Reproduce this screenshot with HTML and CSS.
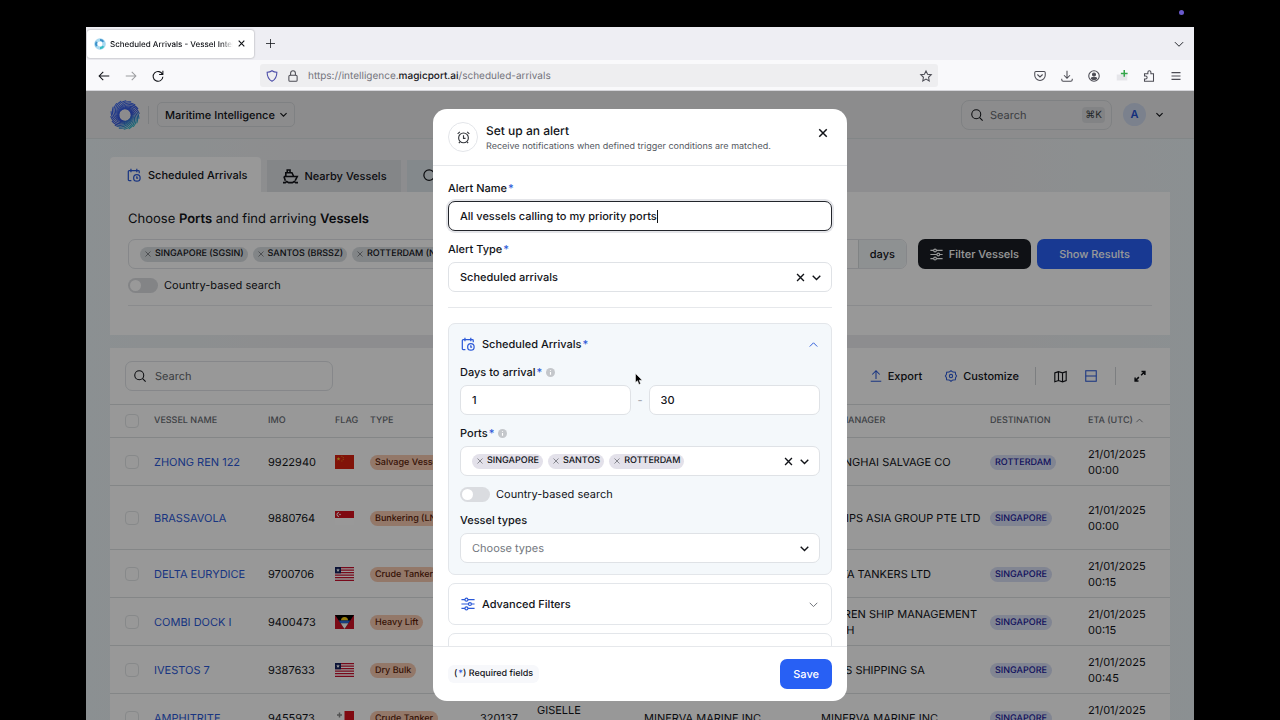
FILE: index.html
```html
<!DOCTYPE html>
<html lang="en">
<head>
<meta charset="utf-8">
<title>Scheduled Arrivals - Vessel Intelligence</title>
<link rel="stylesheet" href="styles.css">
</head>
<body>
<svg class="defs" aria-hidden="true">
  <defs>
    <linearGradient id="swirl-fill" gradientUnits="userSpaceOnUse" x1="6" y1="2" x2="24" y2="30">
      <stop offset="0" stop-color="#3f6df0"/><stop offset=".6" stop-color="#3353d8"/><stop offset="1" stop-color="#2fc9c0"/>
    </linearGradient>
    <path id="blade" d="M14 10C19 8.500 24 11 26 15.500C28 20 27 24.500 24.500 27.500" fill="none" stroke="#fff" stroke-width="1.100" stroke-linecap="round"/>
    <mask id="swirl-mask" maskUnits="userSpaceOnUse" x="0" y="0" width="32" height="32">
      <use href="#blade"/><use href="#blade" transform="rotate(20 16 16)"/><use href="#blade" transform="rotate(40 16 16)"/><use href="#blade" transform="rotate(60 16 16)"/><use href="#blade" transform="rotate(80 16 16)"/><use href="#blade" transform="rotate(100 16 16)"/><use href="#blade" transform="rotate(120 16 16)"/><use href="#blade" transform="rotate(140 16 16)"/><use href="#blade" transform="rotate(160 16 16)"/><use href="#blade" transform="rotate(180 16 16)"/><use href="#blade" transform="rotate(200 16 16)"/><use href="#blade" transform="rotate(220 16 16)"/><use href="#blade" transform="rotate(240 16 16)"/><use href="#blade" transform="rotate(260 16 16)"/><use href="#blade" transform="rotate(280 16 16)"/><use href="#blade" transform="rotate(300 16 16)"/><use href="#blade" transform="rotate(320 16 16)"/><use href="#blade" transform="rotate(340 16 16)"/>
    </mask>
    <symbol id="swirl" viewBox="0 0 32 32"><rect width="32" height="32" fill="url(#swirl-fill)" mask="url(#swirl-mask)"/></symbol>
    <symbol id="i-x" viewBox="0 0 16 16"><path d="M3 3l10 10M13 3L3 13"/></symbol>
    <symbol id="i-down" viewBox="0 0 16 16"><path d="M2.500 5.500L8 11l5.500-5.500"/></symbol>
    <symbol id="i-up" viewBox="0 0 16 16"><path d="M2.500 11L8 5.500l5.500 5.500"/></symbol>
    <symbol id="i-search" viewBox="0 0 16 16"><circle cx="7" cy="7" r="6"/><path d="M11.500 11.500l4 4"/></symbol>
    <symbol id="i-cal" viewBox="0 0 16 16"><path d="M5 14.500H2.500a1 1 0 0 1-1-1V4a1 1 0 0 1 1-1H13a1 1 0 0 1 1 1v2M4.500 .8v4M11.200 .8v4"/><circle cx="11.300" cy="11.300" r="3.700"/><path d="M11.200 9.500v2h1.500"/></symbol>
    <symbol id="i-sliders" viewBox="0 0 16 16"><path d="M.5 3h4M8 3h7.500M.5 8h8M12 8h3.500M.5 13h4M8 13h7.500"/><circle cx="6.200" cy="3" r="1.700"/><circle cx="10.200" cy="8" r="1.700"/><circle cx="6.200" cy="13" r="1.700"/></symbol>
    <symbol id="i-info" viewBox="0 0 16 16"><circle cx="8" cy="8" r="8" fill="#c4c7cb" stroke="none"/><path d="M8 7v5M8 3.800v1.500" stroke="#fff" stroke-width="2"/></symbol>
    <symbol id="f-lr" viewBox="0 0 19 14"><path fill="#fff" d="M0 0h19v14H0z"/><path d="M0 .7h19M0 3.200h19M0 5.700h19M0 8.200h19M0 10.700h19M0 13.300h19" stroke="#c8102e" stroke-width="1.300"/><path fill="#14215c" d="M0 0h6v6.300H0z"/><path fill="#fff" d="M3 1.300l.5 1.300h1.300l-1 .8.4 1.300L3 3.900l-1.200.8.4-1.300-1-.8h1.300z"/></symbol>
  </defs>
</svg>

<div class="browser">
  <div class="tabstrip">
    <div class="browser-tab">
      <svg class="favicon" viewBox="0 0 32 32"><circle cx="16" cy="16" r="11" fill="none" stroke="#a9d9f0" stroke-width="9"/><path d="M7 22a11 11 0 0 1 0-12M16 5a11 11 0 0 1 9 5" fill="none" stroke="#3b8fca" stroke-width="5"/><path d="M16 27a11 11 0 0 0 9-5" fill="none" stroke="#36bfc4" stroke-width="6"/></svg>
      <span class="browser-tab-title">Scheduled Arrivals - Vessel Intelligence</span>
      <button class="plain" aria-label="Close tab"><svg class="icon s9 bold"><use href="#i-x"/></svg></button>
    </div>
    <button class="plain new-tab" aria-label="New tab"><svg class="icon s9" viewBox="0 0 16 16"><path d="M8 0v16M0 8h16"/></svg></button>
    <button class="plain list-tabs" aria-label="List tabs"><svg class="icon s12 thin"><use href="#i-down"/></svg></button>
  </div>
  <div class="toolbar">
    <div class="nav">
      <button class="plain" aria-label="Back"><svg class="icon s12" viewBox="0 0 16 16"><path d="M15 8H1.500M7 2.500L1.500 8 7 13.500"/></svg></button>
      <button class="plain faded" aria-label="Forward"><svg class="icon s12" viewBox="0 0 16 16"><path d="M1 8h13.500M9 2.500L14.500 8 9 13.500"/></svg></button>
      <button class="plain" aria-label="Reload"><svg class="icon s12" viewBox="0 0 16 16"><path d="M14 6A6.500 6.500 0 1 0 14.500 9M14.500 1v5h-5"/></svg></button>
    </div>
    <div class="address">
      <svg class="icon s12 shield" viewBox="0 0 16 16"><path d="M8 1c2 1.500 4 2 6.500 2 0 6-1.500 9.500-6.500 12C3 12.500 1.500 9 1.500 3 4 3 6 2.500 8 1z"/></svg>
      <svg class="icon s12 grey" viewBox="0 0 16 16"><rect x="2.500" y="7" width="11" height="8" rx="1.500"/><path d="M4.800 7V4.200a3.200 3.200 0 0 1 6.400 0V7"/></svg>
      <span class="url">https://intelligence.<b>magicport.ai</b>/scheduled-arrivals</span>
      <svg class="icon s12 grey" viewBox="0 0 16 16"><path d="M8 1.200l2.100 4.500 4.900.6-3.600 3.400.9 4.900L8 12.200l-4.300 2.400.9-4.900L1 6.300l4.900-.6z"/></svg>
    </div>
    <div class="extensions">
      <svg class="icon s12 grey" viewBox="0 0 16 16"><path d="M2.500 2h11a1.500 1.500 0 0 1 1.500 1.500V7A7 7 0 0 1 1 7V3.500A1.500 1.500 0 0 1 2.500 2zM4.500 6L8 9.300 11.500 6"/></svg>
      <svg class="icon s12 grey" viewBox="0 0 16 16"><path d="M8 1v9.500M4 7l4 4 4-4M1 11.500V13a2 2 0 0 0 2 2h10a2 2 0 0 0 2-2v-1.500"/></svg>
      <svg class="icon s12 grey" viewBox="0 0 16 16"><circle cx="8" cy="8" r="7"/><circle cx="8" cy="6" r="2" fill="currentColor"/><path fill="currentColor" d="M4.500 11.500C4.500 9 11.500 9 11.500 11.500 10 13 6 13 4.500 11.500z"/></svg>
      <svg class="icon s12" viewBox="0 0 16 16"><path d="M1 6h14v8H1z" fill="#e6e6ea" stroke="none"/><path d="M11 0v9M6.500 4.500h9" stroke="#35a64b" stroke-width="2"/></svg>
      <svg class="icon s12 grey" viewBox="0 0 16 16"><path d="M2 15h12V5h-3.500V3a2 2 0 0 0-4 0v2H2v3h1.500a2 2 0 0 1 0 4H2z"/></svg>
      <svg class="icon s12 grey" viewBox="0 0 16 16"><path d="M2 3.500h12M2 8h12M2 12.500h12"/></svg>
    </div>
  </div>

  <div class="viewport">
    <div class="app">
      <header class="app-header">
        <svg class="logo"><use href="#swirl"/></svg>
        <span class="vline"></span>
        <button class="product">Maritime Intelligence <svg class="icon s9 bold"><use href="#i-down"/></svg></button>
        <label class="header-search"><svg class="icon s12"><use href="#i-search"/></svg><input type="text" placeholder="Search" aria-label="Search"><kbd>⌘K</kbd></label>
        <button class="account"><span class="avatar">A</span><svg class="icon s9 bold"><use href="#i-down"/></svg></button>
      </header>

      <main class="content">
        <nav class="tabs">
          <button class="tab active"><svg class="icon s14 blue"><use href="#i-cal"/></svg>Scheduled Arrivals</button>
          <button class="tab"><svg class="icon s15" viewBox="0 0 16 16"><path stroke-width="1.700" d="M3 8V4h6.500l2 4M4.500 4V1h3v3M1 8h14.200L13 12.500M1 8l1.500 4.500M0 14.500h2.500l1.500-1.200 2 1.200h4l2-1.200 1.500 1.200H16"/></svg>Nearby Vessels</button>
          <button class="tab pale"><svg class="icon s14"><use href="#i-search"/></svg>Search</button>
        </nav>

        <section class="card finder">
          <h1>Choose <b>Ports</b> and find arriving <b>Vessels</b></h1>
          <div class="finder-row">
            <div class="field chips grow">
              <span class="chip"><svg class="icon s8"><use href="#i-x"/></svg>SINGAPORE (SGSIN)</span>
              <span class="chip"><svg class="icon s8"><use href="#i-x"/></svg>SANTOS (BRSSZ)</span>
              <span class="chip"><svg class="icon s8"><use href="#i-x"/></svg>ROTTERDAM (NLRTM)</span>
            </div>
            <div class="field days"><input type="text" value="30" aria-label="Days to arrival"><span>days</span></div>
            <div class="actions">
              <button class="btn dark"><svg class="icon s13"><use href="#i-sliders"/></svg>Filter Vessels</button>
              <button class="btn primary wide">Show Results</button>
            </div>
          </div>
          <label class="switch"><input type="checkbox">Country-based search</label>
          <hr>
        </section>

        <section class="card results">
          <div class="results-bar">
            <label class="field search"><svg class="icon s12"><use href="#i-search"/></svg><input type="text" placeholder="Search" aria-label="Search vessels"></label>
            <div class="tools">
              <button class="tool"><svg class="icon s12 blue" viewBox="0 0 16 16"><path d="M8 12V1.500M3 6l5-5 5 5M1 15h14"/></svg>Export</button>
              <button class="tool"><svg class="icon s12 blue" viewBox="0 0 16 16"><path d="M8 1l2.500 1.800 3.300.2.400 3.100L15.500 8l-1.300 1.900-.4 3.100-3.300.2L8 15l-2.500-1.800-3.300-.2-.4-3.100L.5 8l1.300-1.900.4-3.100 3.300-.2z"/><circle cx="8" cy="8" r="2.200"/></svg>Customize</button>
              <span class="vline"></span>
              <button class="tool" aria-label="Map view"><svg class="icon s13" viewBox="0 0 16 16"><path d="M1 3.500L5.500 2l5 1.500L15 2v11l-4.500 1.500-5-1.500L1 14.500zM5.500 2v11M10.500 3.500v11"/></svg></button>
              <button class="tool" aria-label="Table view"><svg class="icon s12 blue" viewBox="0 0 16 16"><rect x="1" y="1" width="14" height="14"/><path d="M1 8h14"/></svg></button>
              <span class="vline"></span>
              <button class="tool" aria-label="Full screen"><svg class="icon s12 bold" viewBox="0 0 16 16"><path d="M10 2h4.500v4.500M14.500 2L9.500 7M6 14.500H1.500V10M1.500 14.500l5-5"/></svg></button>
            </div>
          </div>
          <table>
            <colgroup><col class="c-check"><col class="c-name"><col class="c-imo"><col class="c-flag"><col class="c-type"><col class="c-mmsi"><col class="c-alias"><col class="c-owner"><col class="c-manager"><col class="c-dest"><col></colgroup>
            <thead>
              <tr><th><input type="checkbox" aria-label="Select all"></th><th>VESSEL NAME</th><th>IMO</th><th>FLAG</th><th>TYPE</th><th></th><th></th><th>OWNER</th><th>ISM MANAGER</th><th>DESTINATION</th><th>ETA (UTC) <svg class="icon s9"><use href="#i-up"/></svg></th></tr>
            </thead>
            <tbody>
              <tr><td><input type="checkbox" aria-label="Select ZHONG REN 122"></td><td><a href="#">ZHONG REN 122</a></td><td>9922940</td><td><svg class="flag" viewBox="0 0 19 14"><path fill="#d7200f" d="M0 0h19v14H0z"/><path fill="#f7c52b" d="M3.500 2l.5 1.300h1.400L4.300 4.200l.4 1.300-1.200-.8-1.200.8.4-1.300-1.100-.9H3z"/><path d="M6.500 1.300h.8M7.800 2.700h.8M7.800 4.600h.8M6.500 6h.8" stroke="#f7c52b" stroke-width=".8"/></svg></td><td><span class="pill">Salvage Vessel</span></td><td></td><td></td><td></td><td>SHANGHAI SALVAGE CO</td><td><span class="pill port">ROTTERDAM</span></td><td>21/01/2025 00:00</td></tr>
              <tr class="tall"><td><input type="checkbox" aria-label="Select BRASSAVOLA"></td><td><a href="#">BRASSAVOLA</a></td><td>9880764</td><td><svg class="flag" viewBox="0 0 19 14"><path fill="#fff" d="M0 0h19v14H0z"/><path fill="#d50f1d" d="M0 0h19v7H0z"/><path fill="none" stroke="#fff" d="M4 1.500a2 2 0 1 0 0 4"/><circle cx="5" cy="3.500" r=".8" fill="#fff"/></svg></td><td><span class="pill">Bunkering (LNG)</span></td><td></td><td></td><td></td><td>V.SHIPS ASIA GROUP PTE LTD</td><td><span class="pill port">SINGAPORE</span></td><td>21/01/2025 00:00</td></tr>
              <tr><td><input type="checkbox" aria-label="Select DELTA EURYDICE"></td><td><a href="#">DELTA EURYDICE</a></td><td>9700706</td><td><svg class="flag"><use href="#f-lr"/></svg></td><td><span class="pill">Crude Tanker</span></td><td></td><td></td><td></td><td>DELTA TANKERS LTD</td><td><span class="pill port">SINGAPORE</span></td><td>21/01/2025 00:15</td></tr>
              <tr><td><input type="checkbox" aria-label="Select COMBI DOCK I"></td><td><a href="#">COMBI DOCK I</a></td><td>9400473</td><td><svg class="flag" viewBox="0 0 19 14"><path fill="#ce1126" d="M0 0h19v14H0z"/><path fill="#000" d="M0 0h19L9.500 14z"/><path fill="#fcd116" d="M6 5.500a3.500 3.500 0 0 1 7 0z"/><path fill="#2868d8" d="M3.700 5.500h11.600L13.400 8.300H5.600z"/><path fill="#fff" d="M5.600 8.300h7.800L9.500 14z"/></svg></td><td><span class="pill">Heavy Lift</span></td><td></td><td></td><td></td><td>HARREN SHIP MANAGEMENT GMBH</td><td><span class="pill port">SINGAPORE</span></td><td>21/01/2025 00:15</td></tr>
              <tr><td><input type="checkbox" aria-label="Select IVESTOS 7"></td><td><a href="#">IVESTOS 7</a></td><td>9387633</td><td><svg class="flag"><use href="#f-lr"/></svg></td><td><span class="pill">Dry Bulk</span></td><td></td><td></td><td></td><td>ARIES SHIPPING SA</td><td><span class="pill port">SINGAPORE</span></td><td>21/01/2025 00:45</td></tr>
              <tr><td><input type="checkbox" aria-label="Select AMPHITRITE"></td><td><a href="#">AMPHITRITE</a></td><td>9455973</td><td><svg class="flag" viewBox="0 0 19 14"><path fill="#fff" d="M0 0h19v14H0z"/><path fill="#d50f1d" d="M9.500 0H19v14H9.500z"/><path d="M4.500 1.500v5M2 4h5" stroke="#888" stroke-width="1.500"/></svg></td><td><span class="pill">Crude Tanker</span></td><td>320137</td><td>GISELLE MARINE</td><td>MINERVA MARINE INC</td><td>MINERVA MARINE INC</td><td><span class="pill port">SINGAPORE</span></td><td>21/01/2025 01:00</td></tr>
            </tbody>
          </table>
        </section>
      </main>
    </div>

    <div class="backdrop">
      <form class="modal" role="dialog" aria-labelledby="modal-title">
        <header class="modal-head">
          <span class="round"><svg class="icon s13" viewBox="0 0 16 16"><circle cx="8" cy="8.500" r="6"/><path d="M8 5.300V9h2.500M.8 3.500L3.500 1M12.500 1l2.700 2.500M3.500 13.500L2.300 15M12.500 13.500l1.200 1.500"/></svg></span>
          <div class="titles"><h2 id="modal-title">Set up an alert</h2><p>Receive notifications when defined trigger conditions are matched.</p></div>
          <button type="button" class="plain" aria-label="Close"><svg class="icon s12 bold"><use href="#i-x"/></svg></button>
        </header>

        <div class="modal-body">
          <div class="group">
            <label class="lbl" for="alert-name">Alert Name<i>*</i></label>
            <div class="field focused"><input class="typed" id="alert-name" type="text" size="29" value="All vessels calling to my priority ports"><span class="caret"></span></div>
          </div>
          <div class="group">
            <label class="lbl" for="alert-type">Alert Type<i>*</i></label>
            <div class="field"><select id="alert-type"><option>Scheduled arrivals</option></select><button type="button" class="plain" aria-label="Clear type"><svg class="icon s11 bold"><use href="#i-x"/></svg></button><svg class="icon s11 bold"><use href="#i-down"/></svg></div>
          </div>
          <hr>
          <div class="panels">
            <section class="panel open">
              <button type="button" class="panel-title"><svg class="icon s14 blue"><use href="#i-cal"/></svg><span>Scheduled Arrivals<i>*</i></span><svg class="icon s11 blue"><use href="#i-up"/></svg></button>
              <div class="group">
                <label class="lbl" for="day-from">Days to arrival<i>*</i> <svg class="icon s9"><use href="#i-info"/></svg></label>
                <div class="range"><div class="field"><input id="day-from" type="text" value="1"></div><span>-</span><div class="field"><input aria-label="Days to" type="text" value="30"></div></div>
              </div>
              <div class="group">
                <label class="lbl" for="ports">Ports<i>*</i> <svg class="icon s9"><use href="#i-info"/></svg></label>
                <div class="field chips">
                  <span class="chip"><svg class="icon s8"><use href="#i-x"/></svg>SINGAPORE</span>
                  <span class="chip"><svg class="icon s8"><use href="#i-x"/></svg>SANTOS</span>
                  <span class="chip"><svg class="icon s8"><use href="#i-x"/></svg>ROTTERDAM</span>
                  <input id="ports" type="text"><button type="button" class="plain" aria-label="Clear ports"><svg class="icon s11 bold"><use href="#i-x"/></svg></button><svg class="icon s11 bold"><use href="#i-down"/></svg>
                </div>
              </div>
              <label class="switch"><input type="checkbox">Country-based search</label>
              <div class="group">
                <label class="lbl" for="types">Vessel types</label>
                <div class="field"><select id="types" class="empty"><option>Choose types</option></select><svg class="icon s11 bold"><use href="#i-down"/></svg></div>
              </div>
            </section>
            <section class="panel">
              <button type="button" class="panel-title"><svg class="icon s14 blue"><use href="#i-sliders"/></svg><span>Advanced Filters</span><svg class="icon s11 muted"><use href="#i-down"/></svg></button>
            </section>
            <section class="panel">
              <button type="button" class="panel-title" aria-label="Notifications"></button>
            </section>
          </div>
        </div>

        <footer class="modal-foot">
          <span class="required">(<i>*</i>) Required fields</span>
          <button type="button" class="btn primary">Save</button>
        </footer>
      </form>
    </div>
  </div>
</div>
<span class="rec-dot"></span>
<svg class="cursor" viewBox="0 0 8 12"><path d="M.5.500v9l2-1.800L4 11.500l1.600-.7L4.200 7.200h3z" fill="#000" stroke="#fff" stroke-width=".5"/></svg>
</body>
</html>
```
FILE: styles.css
```css
* { box-sizing: border-box; }
body {
  margin: 0;
  height: 100vh;
  padding: 27px 86px 0;
  background: #000;
  color: #111318;
  font: 500 11px/16px Inter, "Liberation Sans", sans-serif;
  text-rendering: geometricPrecision;
  overflow: hidden;
}
h1, h2, p { margin: 0; }
button, input, select { font: inherit; color: inherit; text-rendering: inherit; margin: 0; padding: 0; border: 0; background: none; outline: 0; }
button { display: inline-flex; align-items: center; }
i { font-style: normal; color: #2b59d8; margin-left: 1px; }
hr { width: 100%; margin: 0; border: 0; border-top: 1px solid #e6e8eb; }
.defs { position: absolute; width: 0; height: 0; }

.icon { flex: none; fill: none; stroke: currentColor; stroke-width: 1.4; overflow: visible; }
.icon.bold { stroke-width: 2; }
.icon.thin { stroke-width: 1.2; }
.blue { color: #2b59d8; }
.grey { color: #4c4c54; }
.muted { color: #6d7178; }
.s8 { width: 8px; height: 8px; }
.s9 { width: 9px; height: 9px; }
.s11 { width: 11px; height: 11px; }
.s12 { width: 12px; height: 12px; }
.s13 { width: 13px; height: 13px; }
.s14 { width: 14px; height: 14px; }
.s15 { width: 15px; height: 15px; }

/* Browser window */
.browser { display: flex; flex-direction: column; height: 100%; background: #f9f9fb; }
.tabstrip { display: flex; align-items: center; height: 33px; padding: 0 9px 0 1px; background: #eeeef3; }
.browser-tab { display: flex; align-items: center; gap: 4px; width: 167px; height: 28px; padding: 0 8px 0 7px; border-radius: 3px; background: #fff; box-shadow: 0 0 2px #0006; font-size: 8px; }
.browser-tab-title { flex: 1; overflow: hidden; white-space: nowrap; -webkit-mask-image: linear-gradient(90deg, #000 90%, transparent); }
.favicon { width: 12px; height: 12px; }
.new-tab { margin-left: 12px; }
.list-tabs { margin-left: auto; }
.toolbar { display: flex; align-items: center; height: 31px; padding-top: 1px; border-bottom: 1px solid #d5d5da; }
.nav { display: flex; gap: 15px; width: 174px; padding-left: 12px; }
.faded { opacity: .4; }
.address { flex: 1; display: flex; align-items: center; gap: 9px; height: 23px; padding: 0 6px; border-radius: 3px; background: #eeeef0; }
.shield { color: #4a4ba8; }
.url { flex: 1; color: #74747c; font-size: 10px; font-weight: 400; }
.url b { font-weight: 500; color: #15151a; }
.extensions { display: flex; justify-content: space-between; width: 256px; padding: 0 12px 0 96px; }

/* Application */
.viewport { position: relative; flex: 1; min-height: 0; overflow: hidden; }
.app { height: 100%; background: linear-gradient(90deg, #e8f0f3, #ececee 20%, #ececee 80%, #e8f0f3); }
.app-header { display: flex; align-items: center; height: 48px; padding: 0 30px 0 23px; background: #eaeaeb; border-bottom: 1px solid #d9dfe2; }
.logo { width: 32px; height: 32px; }
.vline { width: 1px; height: 18px; background: #cfd2d5; }
.app-header .vline { margin: 0 8px 0 7px; }
.product { gap: 4px; height: 25px; padding: 0 6px 0 7px; border: 1px solid #d4d7da; border-radius: 5px; }
.header-search { display: flex; align-items: center; gap: 7px; width: 151px; height: 30px; margin-left: auto; padding: 0 6px 0 9px; border: 1px solid #d4d7da; border-radius: 8px; font-weight: 400; }
.header-search input { flex: 1; min-width: 0; }
kbd { padding: 0 3px; border-radius: 4px; background: #d9dbde; font: inherit; font-size: 10px; color: #3b3f45; }
::placeholder { color: #63676d; opacity: 1; }
.account { gap: 9px; margin-left: 11px; }
.avatar { width: 23px; border-radius: 50%; background: #cdd7ec; color: #1f4fcf; font-weight: 600; line-height: 23px; }

.content { padding: 18px 24px 0; }
.tabs { display: flex; align-items: flex-end; gap: 6px; }
.tab { gap: 6px; height: 32px; padding: 0 14px 0 16px; background: #dddfe3; }
.tab.active { height: 35px; gap: 7px; padding: 0 14px 0 17px; background: #fdfdfd; border-radius: 4px 4px 0 0; }
.tab.pale { background: #dde5e9; }
.card { background: #fdfdfd; }
.finder { display: flex; flex-direction: column; padding: 17px 18px 29px; }
.finder h1 { font-size: 13px; line-height: 21px; font-weight: 400; }
.finder h1 b { font-weight: 600; }
.finder-row { display: flex; gap: 11px; margin: 9px 0 8px; }
.grow { flex: 1; }
.days { flex: none; width: 160px; overflow: hidden; }
.app .days { padding-right: 0; }
.days input { width: 0; }
.days span { width: 48px; background: #edf2f4; text-align: center; line-height: 28px; border-left: 1px solid #d5dadd; }
.actions { display: flex; gap: 6px; }
.finder hr { margin-top: 12px; }

.field { display: flex; align-items: center; gap: 5px; height: 30px; padding: 0 11px; border: 1px solid #dfe2e6; border-radius: 7px; background: #fff; }
.app .field { background: #fdfdfd; }
.field input, .field select { flex: 1; min-width: 0; appearance: none; }
.field .empty { color: #73777e; font-weight: 400; }
.chip { display: flex; align-items: center; gap: 3px; height: 15px; padding: 0 4px; border-radius: 8px; background: #e3e1ea; font-size: 9px; white-space: nowrap; }
.app .chip { background: #d9dee2; }
.chip .icon { color: #5d6066; }
.btn { justify-content: center; gap: 7px; height: 30px; padding: 0 13px; border-radius: 7px; color: #fff; }
.btn.primary { background: #2860f4; }
.btn.dark { gap: 6px; padding: 0 12px; background: #191d24; }
.btn.wide { width: 115px; }
.switch { display: flex; align-items: center; gap: 6px; font-weight: 400; }
.switch input { appearance: none; display: flex; width: 30px; height: 15px; padding: 2px; border-radius: 8px; background: #dadce0; }
.switch input::before { content: ""; width: 11px; height: 11px; border-radius: 50%; background: #fff; }

.results { margin-top: 13px; }
.results-bar { display: flex; justify-content: space-between; align-items: center; padding: 13px 24px 13px 15px; }
.search { width: 208px; padding-left: 8px; gap: 9px; font-weight: 400; }
.tools { display: flex; align-items: center; gap: 18px; }
.tool { gap: 6px; }
.tool:nth-child(2) { margin: 0 -2px 0 5px; }
table { width: 100%; border-collapse: collapse; table-layout: fixed; font-weight: 400; }
th { height: 33px; font-size: 9px; font-weight: 500; color: #686c73; }
td { height: 48px; }
.tall td { height: 64px; }
th, td { padding: 0; text-align: left; border-top: 1px solid #dcdfe2; }
th:first-child, td:first-child { padding-left: 15px; }
td:nth-child(7) { padding-right: 40px; }
th input, td input { appearance: none; display: block; width: 14px; height: 14px; border: 1px solid #e2e4e7; border-radius: 4px; }
th .icon { vertical-align: middle; }
td:last-child { padding-right: 24px; }
td a { color: #2b59d8; text-decoration: none; }
.c-check { width: 44px; } .c-name { width: 114px; } .c-imo { width: 67px; } .c-flag { width: 35px; }
.c-type { width: 110px; } .c-mmsi { width: 57px; } .c-alias { width: 107px; } .c-owner { width: 177px; }
.c-manager { width: 169px; } .c-dest { width: 98px; }
.flag { display: block; width: 19px; height: 14px; }
.pill { display: inline-block; padding: 0 5px; border-radius: 8px; background: #f5c8b0; color: #5a1c08; font-size: 9px; line-height: 15px; font-weight: 500; white-space: nowrap; vertical-align: middle; }
.pill.port { background: #d8def3; color: #1a1a9c; }

/* Alert dialog */
.backdrop { position: absolute; inset: 0; display: flex; justify-content: center; padding: 18px 0 19px; background: #0006; }
.modal { display: flex; flex-direction: column; width: 414px; border-radius: 14px; background: #fff; overflow: hidden; }
.modal-head { display: flex; gap: 8px; padding: 13px 18px 11px 15px; border-bottom: 1px solid #e6e8eb; }
.modal-head .plain { align-self: flex-start; margin-top: 5px; }
.round { display: flex; align-items: center; justify-content: center; width: 30px; height: 30px; border: 1px solid #e3e5e9; border-radius: 50%; color: #33363b; }
.titles { flex: 1; }
h2 { font-size: 12px; line-height: 17px; font-weight: 500; }
.titles p { font-size: 9px; line-height: 15px; font-weight: 400; color: #55595f; }
.modal-body { flex: 1; min-height: 0; display: flex; flex-direction: column; gap: 10px; padding: 14px 15px 0; overflow: hidden; }
.modal-body > * { flex: none; }
.modal-body hr { margin: 5px 0; }
.lbl { display: flex; align-items: center; height: 16px; margin-bottom: 5px; }
.lbl .icon { margin-left: 4px; }
.modal .group .field { padding-right: 9px; }
.focused { border-color: #22252b; box-shadow: 0 0 0 2px #e4e5e9; }
.field.focused { gap: 0; }
.field .typed { flex: none; field-sizing: content; }
.caret { width: 1px; height: 13px; background: #111; }
.panels { display: flex; flex-direction: column; gap: 8px; }
.panel { display: flex; flex-direction: column; gap: 10px; padding: 12px; border: 1px solid #e3e6ea; border-radius: 7px; }
.panel.open { padding: 12px 11px 11px; background: #f4f8fb; }
.panel-title { gap: 7px; height: 16px; }
.open .panel-title { margin-bottom: 2px; padding: 0 1px; }
.panel-title span { flex: 1; text-align: left; }
.range { display: flex; align-items: center; gap: 6px; color: #a5a9af; }
.range .field { flex: 1; min-width: 0; color: #111318; }
.modal-foot { display: flex; align-items: center; justify-content: space-between; padding: 12px 15px; border-top: 1px solid #e6e8eb; }
.required { padding: 1px 6px; border-radius: 6px; background: #f7f8fb; font-size: 9px; }

.rec-dot { position: absolute; top: 10px; right: 96px; width: 5px; height: 5px; border-radius: 50%; background: #6a5acd; }
.cursor { position: absolute; left: 635px; top: 373px; width: 8px; height: 12px; overflow: visible; }
```
